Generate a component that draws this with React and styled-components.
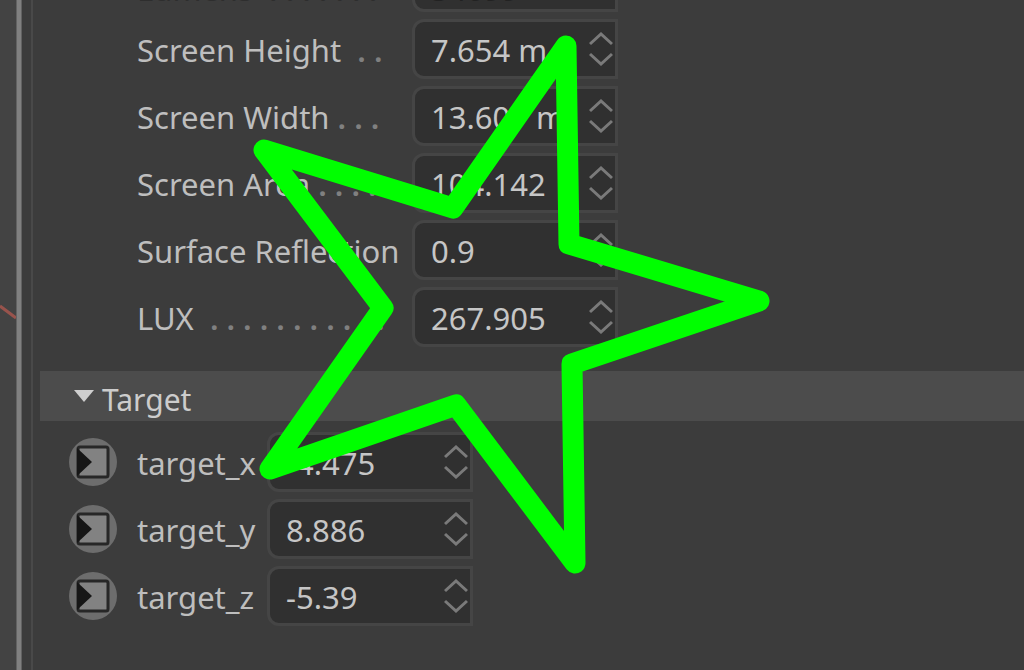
import React, { useState } from "react";
import styled, { createGlobalStyle } from "styled-components";

const screenFields = [
  { id: "lumens", label: "Lumens", dots: "  . . . . . . .", value: "34099", disabled: true },
  { id: "screen-height", label: "Screen Height", dots: "  . .", value: "7.654 m" },
  { id: "screen-width", label: "Screen Width", dots: " . . .", value: "13.607 m" },
  { id: "screen-area", label: "Screen Area", dots: " . . . .", value: "104.142" },
  { id: "surface-reflection", label: "Surface Reflection", dots: "", value: "0.9" },
  { id: "lux", label: "LUX", dots: "  . . . . . . . . . . .", value: "267.905" },
];

const targetFields = [
  { id: "target-x", label: "target_x", value: "-4.475" },
  { id: "target-y", label: "target_y", value: "8.886" },
  { id: "target-z", label: "target_z", value: "-5.39" },
];

function Chevron({ down }) {
  return (
    <svg width="24" height="14" viewBox="0 0 24 14" aria-hidden="true">
      <path
        d={down ? "M1 2 L12 12 L23 2" : "M1 12 L12 2 L23 12"}
        fill="none"
        stroke="#7a7a7a"
        strokeWidth="3"
      />
    </svg>
  );
}

function NumberField({ id, value, disabled }) {
  const [text, setText] = useState(value);
  const step = (delta) => {
    const unit = text.endsWith(" m") ? " m" : "";
    setText(`${Number((parseFloat(text) + delta).toFixed(3))}${unit}`);
  };
  return (
    <FieldBox>
      <FieldInput
        id={id}
        value={text}
        disabled={disabled}
        onChange={(e) => setText(e.target.value)}
      />
      <Spinner>
        <StepButton aria-label="Increase" disabled={disabled} onClick={() => step(1)}>
          <Chevron />
        </StepButton>
        <StepButton aria-label="Decrease" disabled={disabled} onClick={() => step(-1)}>
          <Chevron down />
        </StepButton>
      </Spinner>
    </FieldBox>
  );
}

function PortIcon() {
  return (
    <svg width="48" height="48" viewBox="0 0 48 48" aria-hidden="true">
      <circle cx="24" cy="24" r="24" fill="#6d6d6d" />
      <rect x="9" y="9" width="30" height="30" rx="2" fill="#828282" stroke="#272727" strokeWidth="3" />
      <path d="M8 10 L23 24 L8 38 Z" fill="#161616" />
    </svg>
  );
}

export default function App() {
  const [open, setOpen] = useState(true);
  return (
    <Window>
      <GlobalStyle />
      <Viewport>
        <svg width="16" height="670" viewBox="0 0 16 670" aria-hidden="true">
          <path d="M0 306 L16 318" stroke="#98534c" strokeWidth="3" />
        </svg>
      </Viewport>
      <Splitter />
      <Gutter />
      <Panel>
        <ScreenRows>
          {screenFields.map((field) => (
            <Row key={field.id}>
              <ScreenLabel htmlFor={field.id} $disabled={field.disabled}>
                {field.label}
                <Dots $disabled={field.disabled}>{field.dots}</Dots>
              </ScreenLabel>
              <NumberField {...field} />
            </Row>
          ))}
        </ScreenRows>
        <SectionHeader aria-expanded={open} onClick={() => setOpen(!open)}>
          <svg width="22" height="14" viewBox="0 0 22 14" aria-hidden="true">
            <path d="M1 1 H21 L11 13 Z" fill="#cfcfcf" />
          </svg>
          <SectionTitle>Target</SectionTitle>
        </SectionHeader>
        {open && (
          <TargetRows>
            {targetFields.map((field) => (
              <Row key={field.id}>
                <PortButton aria-label={`Connect ${field.label}`}>
                  <PortIcon />
                </PortButton>
                <TargetLabel htmlFor={field.id}>{field.label}</TargetLabel>
                <NumberField {...field} />
              </Row>
            ))}
          </TargetRows>
        )}
      </Panel>
      <Star width="1024" height="670" viewBox="0 0 1024 670" aria-hidden="true">
        <path d="M566 46 L453 208 L264 150 L383 308 L270 469 L456 405 L575 563 L572 364 L759 301 L569 244 Z" />
      </Star>
    </Window>
  );
}

const GlobalStyle = createGlobalStyle`
  * {
    box-sizing: border-box;
  }
  body {
    margin: 0;
    background: #3c3c3c;
    overflow: hidden;
  }
  body, button, input {
    font-family: "Noto Sans", "Open Sans", sans-serif;
    font-size: 31px;
  }
  svg {
    display: block;
  }
`;

const Window = styled.div`
  position: relative;
  display: flex;
  height: 100vh;
  overflow: hidden;
  color: #bebebe;
`;

const Viewport = styled.div`
  flex: 0 0 16px;
  background: #434343;
`;

const Splitter = styled.div`
  flex: 0 0 6px;
  background: #808080;
  border: solid #626262;
  border-width: 0 1px;
`;

const Gutter = styled.div`
  flex: 0 0 11px;
  border-right: 2px solid #494949;
`;

const Panel = styled.main`
  flex: 1;
  display: flex;
  flex-direction: column;
  padding-left: 7px;
  margin-top: -48px;
`;

const ScreenRows = styled.div`
  display: flex;
  flex-direction: column;
  gap: 7px;
  padding: 0 0 24px 97px;
`;

const TargetRows = styled.div`
  display: flex;
  flex-direction: column;
  gap: 7px;
  padding: 11px 0 0 29px;
`;

const Row = styled.div`
  display: flex;
  align-items: center;
  height: 60px;
`;

const ScreenLabel = styled.label`
  width: 275px;
  padding-top: ${(props) => (props.$disabled ? "14px" : "2px")};
  line-height: 40px;
  white-space: pre;
  color: ${(props) => (props.$disabled ? "#2e2e2e" : "inherit")};
`;

const Dots = styled.span`
  font-weight: 600;
  color: ${(props) => (props.$disabled ? "#2e2e2e" : "#808080")};
`;

const TargetLabel = styled.label`
  width: 130px;
  padding-top: 2px;
  line-height: 40px;
`;

const FieldBox = styled.div`
  display: flex;
  width: 206px;
  height: 60px;
  border: 3px solid #454545;
  border-radius: 12px 0 0 12px;
  background: #303030;
  overflow: hidden;
`;

const FieldInput = styled.input`
  flex: 1;
  min-width: 0;
  padding: 2px 0 0 16px;
  border: 0;
  outline: 0;
  background: transparent;
  color: #c6c6c6;
  &:disabled {
    padding-top: 14px;
    color: #222222;
  }
`;

const Spinner = styled.div`
  display: flex;
  flex-direction: column;
  justify-content: center;
  gap: 6px;
  width: 26px;
`;

const StepButton = styled.button`
  padding: 0;
  border: 0;
  background: transparent;
`;

const SectionHeader = styled.button`
  display: flex;
  align-items: center;
  gap: 7px;
  height: 50px;
  padding: 0 0 0 33px;
  border: 0;
  background: #4c4c4c;
  color: #cccccc;
  text-align: left;
`;

const SectionTitle = styled.span`
  padding-top: 8px;
  font-size: 30px;
  line-height: 40px;
`;

const PortButton = styled.button`
  width: 48px;
  height: 48px;
  margin-right: 20px;
  padding: 0;
  border: 0;
  border-radius: 50%;
  background: transparent;
`;

const Star = styled.svg`
  position: absolute;
  top: 0;
  left: 0;
  pointer-events: none;
  fill: none;
  stroke: #00ff00;
  stroke-width: 21px;
  stroke-linejoin: round;
`;
